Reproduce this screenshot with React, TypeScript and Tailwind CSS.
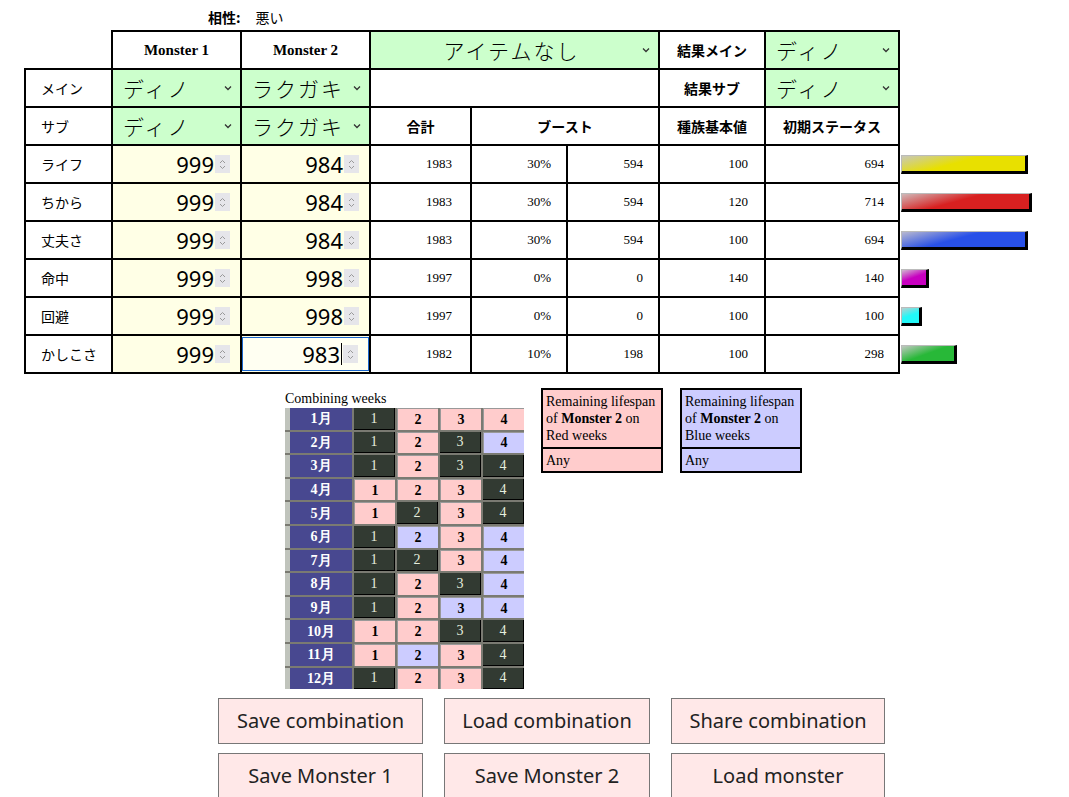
import React from "react";

const serif = "font-['Liberation_Serif','Times_New_Roman',serif]";
const jp = "font-['Noto_Sans_CJK_JP','Noto_Sans',sans-serif]";

type Stat = {
  label: string;
  m1: number;
  m2: number;
  total: number;
  pct: string;
  boost: number;
  base: number;
  init: number;
  bar: string;
};

const stats: Stat[] = [
  { label: "ライフ", m1: 999, m2: 984, total: 1983, pct: "30%", boost: 594, base: 100, init: 694, bar: "bg-[linear-gradient(165deg,#c8c8b8_0%,#e8e000_45%)]" },
  { label: "ちから", m1: 999, m2: 984, total: 1983, pct: "30%", boost: 594, base: 120, init: 714, bar: "bg-[linear-gradient(165deg,#d0b8b8_0%,#d82020_45%)]" },
  { label: "丈夫さ", m1: 999, m2: 984, total: 1983, pct: "30%", boost: 594, base: 100, init: 694, bar: "bg-[linear-gradient(165deg,#b8b8d0_0%,#2850e8_45%)]" },
  { label: "命中", m1: 999, m2: 998, total: 1997, pct: "0%", boost: 0, base: 140, init: 140, bar: "bg-[linear-gradient(160deg,#d0b8d0_0%,#c800c0_50%)]" },
  { label: "回避", m1: 999, m2: 998, total: 1997, pct: "0%", boost: 0, base: 100, init: 100, bar: "bg-[linear-gradient(160deg,#b8d0d0_0%,#22f8f8_50%)]" },
  { label: "かしこさ", m1: 999, m2: 983, total: 1982, pct: "10%", boost: 198, base: 100, init: 298, bar: "bg-[linear-gradient(160deg,#c0c8c0_0%,#28b838_50%)]" },
];

const weeks = ["DPPP", "DPDB", "DPDD", "PPPD", "PDPD", "DBPB", "DDPB", "DPDB", "DPBB", "PPDD", "PBPD", "DPPD"];

function Chevron() {
  return (
    <svg width="8" height="6" viewBox="0 0 8 6" className="shrink-0">
      <polyline points="1,1.5 4,4.5 7,1.5" fill="none" stroke="#333" strokeWidth="1.3" />
    </svg>
  );
}

function Select({ value, center }: { value: string; center?: boolean }) {
  return (
    <div className={`flex h-[34px] items-center bg-[#ccffcc] pl-[10px] pr-[8px] ${jp}`}>
      <span className={`flex-1 text-[21px] font-light leading-none tracking-[2px] ${center ? "text-center" : ""}`}>{value}</span>
      <Chevron />
    </div>
  );
}

function NumInput({ value, focused }: { value: number; focused?: boolean }) {
  return (
    <div
      className={`flex h-[34px] items-center justify-end bg-[#ffffe6] pr-[10px] font-['Noto_Sans',sans-serif] ${
        focused ? "border border-[#1a66cc] bg-[#fffff2]" : ""
      }`}
    >
      <span className="text-[22px] leading-none text-black">{value}</span>
      {focused && <span className="ml-[1px] h-[22px] w-[1px] bg-black" />}
      <span className="ml-[1px] flex h-[18px] w-[15px] flex-col items-center justify-center bg-[#e6e6ea]">
        <svg width="7" height="11" viewBox="0 0 7 11">
          <polyline points="1,4 3.5,1.5 6,4" fill="none" stroke="#999" strokeWidth="1" />
          <polyline points="1,7 3.5,9.5 6,7" fill="none" stroke="#999" strokeWidth="1" />
        </svg>
      </span>
    </div>
  );
}

const cell = "border-2 border-black p-0 h-[38px]";
const num = `${cell} ${serif} text-[13px] text-right`;

export default function App() {
  return (
    <div className="min-h-[797px] w-[1069px] overflow-hidden bg-white text-black">
      <div className={`flex h-[30px] items-center pl-[208px] pt-[5px] text-[14px] ${jp}`}>
        <span className="font-bold">相性:</span>
        <span className="ml-[15px]">悪い</span>
      </div>

      <table className="ml-[24px] table-fixed border-collapse">
        <colgroup>
          <col className="w-[87px]" />
          <col className="w-[129px]" />
          <col className="w-[129px]" />
          <col className="w-[101px]" />
          <col className="w-[96px]" />
          <col className="w-[92px]" />
          <col className="w-[106px]" />
          <col className="w-[134px]" />
          <col className="w-[140px]" />
        </colgroup>
        <tbody>
          <tr>
            <td className="h-[38px] border-none p-0" />
            <td className={`${cell} ${serif} text-center text-[15px] font-bold`}>Monster 1</td>
            <td className={`${cell} ${serif} text-center text-[15px] font-bold`}>Monster 2</td>
            <td colSpan={3} className={`${cell} bg-[#ccffcc]`}>
              <Select value="アイテムなし" center />
            </td>
            <td className={`${cell} ${jp} text-center text-[14px] font-bold`}>結果メイン</td>
            <td className={`${cell} bg-[#ccffcc]`}>
              <Select value="ディノ" />
            </td>
          </tr>
          <tr>
            <td className={`${cell} ${jp} pl-[15px] text-[14px]`}>メイン</td>
            <td className={`${cell} bg-[#ccffcc]`}>
              <Select value="ディノ" />
            </td>
            <td className={`${cell} bg-[#ccffcc]`}>
              <Select value="ラクガキ" />
            </td>
            <td colSpan={3} className={cell} />
            <td className={`${cell} ${jp} text-center text-[14px] font-bold`}>結果サブ</td>
            <td className={`${cell} bg-[#ccffcc]`}>
              <Select value="ディノ" />
            </td>
          </tr>
          <tr>
            <td className={`${cell} ${jp} pl-[15px] text-[14px]`}>サブ</td>
            <td className={`${cell} bg-[#ccffcc]`}>
              <Select value="ディノ" />
            </td>
            <td className={`${cell} bg-[#ccffcc]`}>
              <Select value="ラクガキ" />
            </td>
            <td className={`${cell} ${jp} text-center text-[14px] font-bold`}>合計</td>
            <td colSpan={2} className={`${cell} ${jp} text-center text-[14px] font-bold`}>ブースト</td>
            <td className={`${cell} ${jp} text-center text-[14px] font-bold`}>種族基本値</td>
            <td className={`${cell} ${jp} text-center text-[14px] font-bold`}>初期ステータス</td>
          </tr>
          {stats.map((s, i) => (
            <tr key={s.label}>
              <td className={`${cell} ${jp} pl-[15px] text-[14px]`}>{s.label}</td>
              <td className={`${cell} bg-[#ffffe6]`}>
                <NumInput value={s.m1} />
              </td>
              <td className={`${cell} bg-[#ffffe6]`}>
                <NumInput value={s.m2} focused={i === stats.length - 1} />
              </td>
              <td className={`${num} pr-[18px]`}>{s.total}</td>
              <td className={`${num} pr-[15px]`}>{s.pct}</td>
              <td className={`${num} pr-[15px]`}>{s.boost}</td>
              <td className={`${num} pr-[16px]`}>{s.base}</td>
              <td className={`${num} pr-[14px]`}>{s.init}</td>
              <td className="h-[38px] border-none p-0 pl-[1px]">
                <div
                  className={`h-[19px] border-t border-l border-r-[3px] border-b-[3px] border-t-[#bbb] border-l-[#bbb] border-r-black border-b-black ${s.bar}`}
                  style={{ width: Math.round(s.init / 5.6 + 3) }}
                />
              </td>
            </tr>
          ))}
        </tbody>
      </table>

      <div className={`mt-[16px] flex items-start ${serif} text-[14px]`}>
        <div className="ml-[285px] w-[239px]">
          <div className="h-[18px] leading-[18px]">Combining weeks</div>
          <div className="grid grid-cols-[67px_41px_41px_41px_41px] gap-[2px] bg-[#7a7a72]">
            {weeks.map((w, m) => (
              <React.Fragment key={m}>
                <div className="flex h-[21.6px] items-center justify-center border-l-[5px] border-[#c0c4bc] bg-[#484890] text-[14px] font-bold text-white">
                  {m + 1}月
                </div>
                {w.split("").map((c, k) => (
                  <div
                    key={k}
                    className={`flex h-[21.6px] items-center justify-center text-[14px] ${
                      c === "D"
                        ? "border-r border-b border-black bg-[#323a32] text-[#e6eede]"
                        : c === "P"
                        ? "border-t border-l border-[#999] bg-[#ffcccc] font-bold"
                        : "border-t border-l border-[#999] bg-[#ccccff] font-bold"
                    }`}
                  >
                    {k + 1}
                  </div>
                ))}
              </React.Fragment>
            ))}
          </div>
        </div>

        <div className="ml-[17px] mt-[-2px] w-[122px] border-2 border-black bg-[#ffcccc]">
          <div className="px-[3px] py-[3px] leading-[17px]">
            Remaining lifespan of <b>Monster 2</b> on Red weeks
          </div>
          <div className="flex h-[24px] items-center border-t-2 border-black px-[3px]">Any</div>
        </div>
        <div className="ml-[17px] mt-[-2px] w-[122px] border-2 border-black bg-[#ccccff]">
          <div className="px-[3px] py-[3px] leading-[17px]">
            Remaining lifespan of <b>Monster 2</b> on Blue weeks
          </div>
          <div className="flex h-[24px] items-center border-t-2 border-black px-[3px]">Any</div>
        </div>
      </div>

      <div className="ml-[218px] mt-[9px] grid w-[667px] grid-cols-[205px_206px_214px] gap-x-[21px] gap-y-[9px] font-['Noto_Sans',sans-serif] text-[20px] text-[#222]">
        {["Save combination", "Load combination", "Share combination", "Save Monster 1", "Save Monster 2", "Load monster"].map((t) => (
          <button key={t} className="h-[46px] border border-[#777] bg-[#ffe8e8]">
            {t}
          </button>
        ))}
      </div>
    </div>
  );
}
